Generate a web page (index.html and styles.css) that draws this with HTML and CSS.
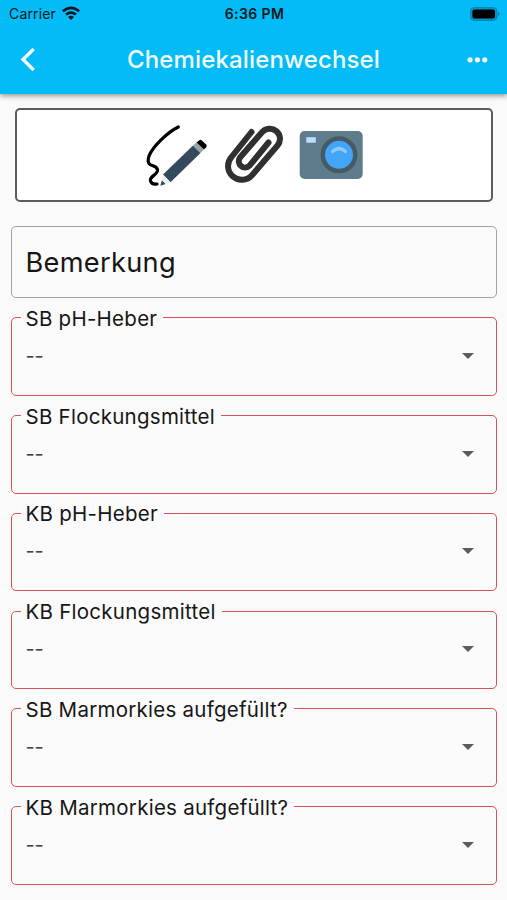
FILE: index.html
```html
<!DOCTYPE html>
<html lang="de">
<head>
<meta charset="utf-8">
<title>Chemiekalienwechsel</title>
<link rel="stylesheet" href="styles.css">
</head>
<body>
<header class="header">
  <div class="status">
    <div class="carrier"><span class="carrier-name">Carrier</span>
      <svg width="20" height="15" viewBox="0 0 20 15"><g fill="none" stroke="#071820" stroke-width="2.6"><path d="M1.8 5.3Q10 -1.6 18.2 5.3"/><path d="M5 8.6Q10 4.6 15 8.6"/></g><path d="M7 10.9Q10 8.7 13 10.9L10 14Z" fill="#071820"/></svg>
    </div>
    <div class="time">6:36 PM</div>
    <svg class="battery" width="30" height="14" viewBox="0 0 30 14"><rect x=".6" y=".6" width="26.4" height="12.8" rx="3.6" fill="#0295c4" stroke="#0883aa"/><rect x="2.4" y="2.4" width="22.6" height="9.2" rx="2" fill="#000"/><path d="M28 4.8Q31 7 28 9.2Z" fill="#0883aa"/></svg>
  </div>
  <div class="bar">
    <svg width="16" height="26" viewBox="0 0 16 26"><path d="M14.700 2L4 12.500L14.700 23" fill="none" stroke="#f4fdff" stroke-width="3.4"/></svg>
    <h1 class="title">Chemiekalienwechsel</h1>
    <svg width="22" height="6" viewBox="0 0 22 6" fill="#f4fdff"><circle cx="3" cy="2.800" r="2.600"/><circle cx="10.400" cy="2.800" r="2.600"/><circle cx="17.800" cy="2.800" r="2.600"/></svg>
  </div>
</header>
<main class="content">
  <div class="tools">
    <svg width="64" height="64" viewBox="145 122 64 64">
      <path d="M178.300 126C168 131 153 145 149 155C145 168 157 162 157.500 169C158 174 149 175 150.500 180C151.500 183 154 183.500 157 183" fill="none" stroke="#000" stroke-width="3.2" stroke-linecap="round"/>
      <path d="M163 173.500L193 144.500L200.500 152L170.500 181.300Z" fill="#34495e"/>
      <path d="M193 144.500L196.500 141.400L204 148.500L200.500 152Z" fill="#95a5a5"/>
      <path d="M196.500 141.400L199.200 139.200Q200.500 138.200 201.800 139.400L206.200 143.600Q207.200 144.800 206.200 146.300L204 148.500Z" fill="#000"/>
      <path d="M163 173.500L170.500 181.300L160.400 184.500Z" fill="#ecf0f1"/><path d="M161.800 179.500L165.600 183.100L160.300 184.800Z" fill="#34495e"/>
    </svg>
    <svg width="62" height="62" viewBox="223 124 62 62"><path d="M251.500 132L231.500 157A13.200 13.200 0 0 0 252 175.200L277.500 145.500A10.200 10.200 0 0 0 262 132.200L240 157.500A6.300 6.300 0 0 0 249.500 165.700L268.500 142.500" fill="none" stroke="#303030" stroke-width="6" stroke-linecap="round" stroke-linejoin="round"/></svg>
    <svg width="64" height="50" viewBox="299 130 64 50"><rect x="299.700" y="131" width="63" height="48" rx="5" fill="#5e7c8b"/><rect x="306.300" y="137.200" width="9.500" height="5.500" fill="#bbdefb"/><circle cx="339" cy="154.800" r="18.500" fill="#455a64"/><circle cx="339" cy="154.800" r="14" fill="#42a5f5"/><path d="M332.500 151.700Q339 145.300 345.500 151.700" fill="none" stroke="#90caf9" stroke-width="3.200" stroke-linecap="round"/></svg>
  </div>
  <div class="remark"><span class="remark-text">Bemerkung</span></div>
  <div class="fields">
    <fieldset class="field"><legend><span class="label">SB pH-Heber</span></legend><div class="select"><span class="value">--</span><i class="arrow"></i></div></fieldset>
    <fieldset class="field"><legend><span class="label">SB Flockungsmittel</span></legend><div class="select"><span class="value">--</span><i class="arrow"></i></div></fieldset>
    <fieldset class="field"><legend><span class="label">KB pH-Heber</span></legend><div class="select"><span class="value">--</span><i class="arrow"></i></div></fieldset>
    <fieldset class="field"><legend><span class="label">KB Flockungsmittel</span></legend><div class="select"><span class="value">--</span><i class="arrow"></i></div></fieldset>
    <fieldset class="field"><legend><span class="label">SB Marmorkies aufgefüllt?</span></legend><div class="select"><span class="value">--</span><i class="arrow"></i></div></fieldset>
    <fieldset class="field"><legend><span class="label">KB Marmorkies aufgefüllt?</span></legend><div class="select"><span class="value">--</span><i class="arrow"></i></div></fieldset>
  </div>
</main>
</body>
</html>
```
FILE: styles.css
```css
* { box-sizing: border-box; }
body {
  margin: 0;
  height: 900px;
  overflow: hidden;
  background: #fafafa;
  color: #161616;
  font-family: Inter, "Liberation Sans", sans-serif;
}
svg { display: block; flex: none; }
.header {
  height: 94px;
  background: #03bbf6;
  box-shadow: 0 2px 5px rgba(0, 0, 0, .4);
}
.status {
  display: grid;
  grid-template-columns: 1fr auto 1fr;
  align-items: center;
  height: 27px;
  padding: 0 7px 0 9px;
  color: #071820;
}
.carrier { display: flex; align-items: center; gap: 5px; font-size: 14px; }
.carrier-name { letter-spacing: .15px; }
.time { font-size: 14px; font-weight: 600; letter-spacing: .4px; }
.battery { justify-self: end; }
.bar {
  display: flex;
  align-items: center;
  justify-content: space-between;
  height: 66px;
  padding: 0 18px 0 19px;
}
.title {
  margin: 0 0 1px 5px;
  color: #f4fdff;
  font-size: 24px;
  font-weight: 500;
  letter-spacing: .15px;
}
.content { padding: 14px 10px 0 11px; }
.tools {
  display: flex;
  align-items: center;
  justify-content: center;
  gap: 14px;
  height: 94px;
  margin: 0 4px;
  border: 2px solid #5c5c5c;
  border-radius: 5px;
  background: #fff;
}
.remark {
  display: flex;
  align-items: center;
  height: 72px;
  margin-top: 24px;
  padding: 0 14px;
  border: 1px solid #a2a2a2;
  border-radius: 5px;
  font-size: 27.2px;
}
.remark-text { margin-left: -.5px; letter-spacing: .3px; }
.fields { display: grid; gap: 9.75px; margin-top: 9.75px; }
.field {
  min-width: 0;
  height: 88px;
  margin: 0;
  padding: 0 22px 0 9px;
  border: 1px solid #de5057;
  border-radius: 5px;
}
.field legend {
  height: 20px;
  padding: 0 6px 0 4.5px;
  font-size: 20.5px;
  line-height: 22px;
  white-space: nowrap;
}
.label { letter-spacing: .26px; }
.select {
  display: flex;
  align-items: center;
  justify-content: space-between;
  height: 56px;
  padding-left: 4.5px;
  color: #444;
  font-size: 20px;
}
.value { letter-spacing: -.2px; }
.arrow {
  border: 6px solid transparent;
  border-top-color: #5c5c5c;
  border-bottom: 0;
}
```
